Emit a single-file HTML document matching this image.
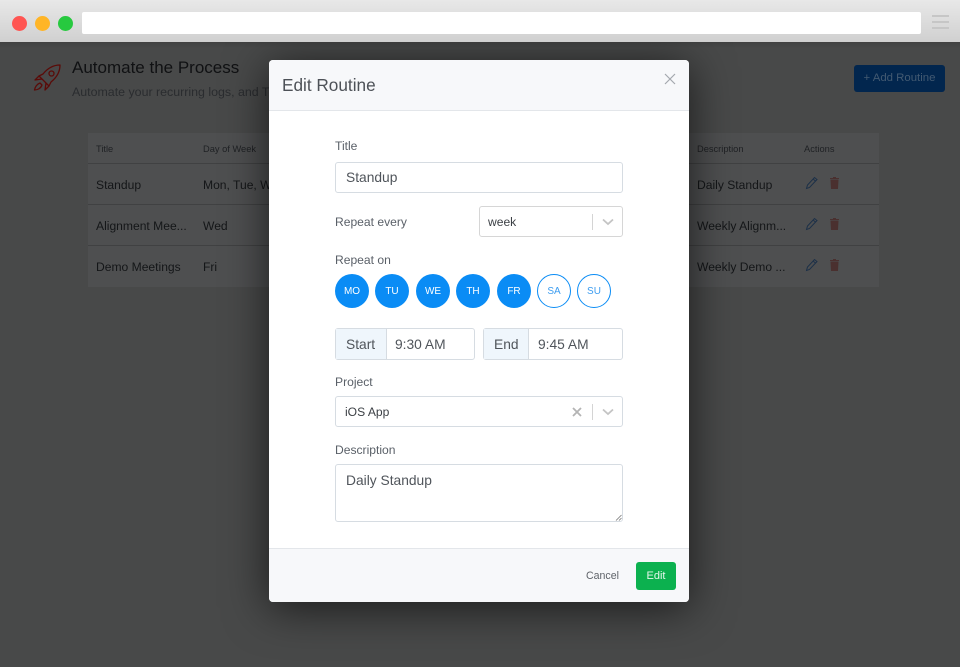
<!DOCTYPE html>
<html><head><meta charset="utf-8"><style>
html,body{margin:0;padding:0}
body{width:960px;height:667px;position:relative;overflow:hidden;background:#484949;font-family:"Liberation Sans",sans-serif;color:#4a4f55}
.a{position:absolute;white-space:nowrap}
.top{z-index:5}
.bar{left:0;top:0;width:960px;height:42px;background:linear-gradient(#e8e8e8,#d0d0d0)}
.dot{width:15px;height:15px;border-radius:50%;top:16px}
.line{height:1px;background:#404142}
.t{font-size:12.1px;color:#141618;line-height:16px}
.th{font-size:9.3px;color:#1f2124;line-height:12px}
.modal{left:269px;top:60px;width:420px;height:542px;background:#fff;border-radius:4px;box-shadow:0 6px 44px rgba(0,0,0,.65);overflow:hidden}
.lab{font-size:12.1px;color:#5a6068;line-height:16px}
.box{border:1px solid #d6dce2;border-radius:3px;box-sizing:border-box;background:#fff}
.v{font-size:13.8px;color:#50555b;line-height:18px}
.c{width:34px;height:34px;border-radius:50%;top:274px;background:#0a8cf5;color:#fff;font-size:10px;line-height:36px;text-align:center;box-sizing:border-box}
.o{background:#fff;border:1px solid #0a8cf5;color:#3d9df0;line-height:34px}
</style></head><body>
<div class="a bar top"></div>
<div class="a" style="left:0;top:42px;width:960px;height:6px;background:linear-gradient(rgba(0,0,0,.1),rgba(0,0,0,0))"></div>
<div class="a dot top" style="left:12px;background:#ff5552"></div>
<div class="a dot top" style="left:35px;background:#ffb527"></div>
<div class="a dot top" style="left:58px;background:#27c93f"></div>
<div class="a top" style="left:82px;top:12px;width:839px;height:22px;background:#fff;border-radius:2px"></div>
<div class="a top" style="left:932px;top:15px;width:17px;height:2px;background:#c6c6c6"></div>
<div class="a top" style="left:932px;top:21px;width:17px;height:2px;background:#c6c6c6"></div>
<div class="a top" style="left:932px;top:27px;width:17px;height:2px;background:#c6c6c6"></div>

<svg class="a" style="left:33px;top:63px" width="29" height="29" viewBox="0 0 29 29" fill="none" stroke="#5a0b08" stroke-width="1.3" stroke-linejoin="round"><path d="M27 2 C19 2 14 6 10 11 L6 13 L9 16 L13 20 L16 23 L18 19 C23 15 27 10 27 2Z"/><circle cx="18.500" cy="10.500" r="2.500"/><path d="M6 13 L2 17 L9 16M16 23 L12 27 L13 20M7 20 C4 21 2 24 1.500 27 C5 27 8 25 9 22Z"/></svg>
<div class="a" style="left:72px;top:57px;font-size:17px;line-height:22px;color:#101113">Automate the Process</div>
<div class="a" style="left:72px;top:84px;font-size:12.4px;line-height:17px;color:#2a2c2f">Automate your recurring logs, and Ti</div>
<div class="a" style="left:854px;top:65px;width:91px;height:27px;background:#02264e;border-radius:3px;color:#435a72;font-size:11.4px;line-height:27px;text-align:center">+ Add Routine</div>

<div class="a" style="left:88px;top:133px;width:791px;height:154px;background:#4e4f50"></div>
<div class="a line" style="left:88px;top:163px;width:791px"></div>
<div class="a line" style="left:88px;top:204px;width:791px"></div>
<div class="a line" style="left:88px;top:245px;width:791px"></div>
<div class="a th" style="left:96px;top:143px">Title</div>
<div class="a th" style="left:203px;top:143px">Day of Week</div>
<div class="a th" style="left:697px;top:143px">Description</div>
<div class="a th" style="left:804px;top:143px">Actions</div>
<div class="a t" style="left:96px;top:177px">Standup</div>
<div class="a t" style="left:203px;top:177px">Mon, Tue, W</div>
<div class="a t" style="left:697px;top:177px">Daily Standup</div>
<div class="a t" style="left:96px;top:218px">Alignment Mee...</div>
<div class="a t" style="left:203px;top:218px">Wed</div>
<div class="a t" style="left:697px;top:218px">Weekly Alignm...</div>
<div class="a t" style="left:96px;top:259px">Demo Meetings</div>
<div class="a t" style="left:203px;top:259px">Fri</div>
<div class="a t" style="left:697px;top:259px">Weekly Demo ...</div>

<svg class="a" style="left:804px;top:176px" width="40" height="14" viewBox="0 0 40 14" fill="none" stroke-width="1"><path stroke="#1c3048" d="M2.500 12.500 L3.500 9 L10.500 1.500 L13 3.500 L5.500 11.500ZM9 3 L11.500 5"/><path fill="#4a302f" stroke="#4a302f" d="M27 4h7l-.5 8.500h-6zM26 2.500h9M29 1.500h3"/></svg>
<svg class="a" style="left:804px;top:217px" width="40" height="14" viewBox="0 0 40 14" fill="none" stroke-width="1"><path stroke="#1c3048" d="M2.500 12.500 L3.500 9 L10.500 1.500 L13 3.500 L5.500 11.500ZM9 3 L11.500 5"/><path fill="#4a302f" stroke="#4a302f" d="M27 4h7l-.5 8.500h-6zM26 2.500h9M29 1.500h3"/></svg>
<svg class="a" style="left:804px;top:258px" width="40" height="14" viewBox="0 0 40 14" fill="none" stroke-width="1"><path stroke="#1c3048" d="M2.500 12.500 L3.500 9 L10.500 1.500 L13 3.500 L5.500 11.500ZM9 3 L11.500 5"/><path fill="#4a302f" stroke="#4a302f" d="M27 4h7l-.5 8.500h-6zM26 2.500h9M29 1.500h3"/></svg>

<div class="a modal"></div>
<div class="a" style="left:269px;top:60px;width:420px;height:51px;background:#f7f8fa;border-bottom:1px solid #e3e6ea;box-sizing:border-box;border-radius:4px 4px 0 0"></div>
<div class="a" style="left:282px;top:74px;font-size:17.2px;line-height:22px;color:#4d5157">Edit Routine</div>
<svg class="a" style="left:664px;top:73px" width="12" height="12" fill="none" stroke="#a4a8ad" stroke-width="1.2"><path d="M1 1L11 11M11 1L1 11"/></svg>

<div class="a lab" style="left:335px;top:138px">Title</div>
<div class="a box" style="left:335px;top:162px;width:288px;height:31px"></div>
<div class="a v" style="left:346px;top:169px">Standup</div>
<div class="a lab" style="left:335px;top:214px">Repeat every</div>
<div class="a box" style="left:479px;top:206px;width:144px;height:31px;border-color:#d6d6d6"></div>
<div class="a t" style="left:488px;top:214px;color:#3c4045">week</div>
<div class="a" style="left:592px;top:214px;width:1px;height:16px;background:#d4d4d4"></div>
<svg class="a" style="left:602px;top:218px" width="12" height="8" fill="none" stroke="#c4c4c4" stroke-width="1.800"><path d="M1 1.500L6 6L11 1.500"/></svg>

<div class="a lab" style="left:335px;top:252px">Repeat on</div>
<div class="a c" style="left:335px">MO</div>
<div class="a c" style="left:375px">TU</div>
<div class="a c" style="left:416px">WE</div>
<div class="a c" style="left:456px">TH</div>
<div class="a c" style="left:497px">FR</div>
<div class="a c o" style="left:537px">SA</div>
<div class="a c o" style="left:577px">SU</div>

<div class="a box" style="left:335px;top:328px;width:140px;height:32px"></div>
<div class="a" style="left:336px;top:329px;width:50px;height:30px;background:#eff6fc;border-right:1px solid #d6dce2"></div>
<div class="a v" style="left:346px;top:336px">Start</div>
<div class="a v" style="left:395px;top:336px">9:30 AM</div>
<div class="a box" style="left:483px;top:328px;width:140px;height:32px"></div>
<div class="a" style="left:484px;top:329px;width:44px;height:30px;background:#eff6fc;border-right:1px solid #d6dce2"></div>
<div class="a v" style="left:494px;top:336px">End</div>
<div class="a v" style="left:538px;top:336px">9:45 AM</div>

<div class="a lab" style="left:335px;top:374px">Project</div>
<div class="a box" style="left:335px;top:396px;width:288px;height:31px"></div>
<div class="a t" style="left:345px;top:404px;color:#3c4045">iOS App</div>
<svg class="a" style="left:572px;top:407px" width="10" height="10" fill="none" stroke="#b4b4b4" stroke-width="1.800"><path d="M1 1L9 9M9 1L1 9"/></svg>
<div class="a" style="left:592px;top:404px;width:1px;height:16px;background:#d4d4d4"></div>
<svg class="a" style="left:602px;top:408px" width="12" height="8" fill="none" stroke="#c4c4c4" stroke-width="1.800"><path d="M1 1.500L6 6L11 1.500"/></svg>

<div class="a lab" style="left:335px;top:442px">Description</div>
<div class="a box" style="left:335px;top:464px;width:288px;height:58px"></div>
<div class="a v" style="left:346px;top:472px">Daily Standup</div>
<svg class="a" style="left:615px;top:514px" width="7" height="7" fill="none" stroke="#777" stroke-width=".8"><path d="M1 6.500L6.500 1M4 6.500L6.500 4"/></svg>

<div class="a" style="left:269px;top:548px;width:420px;height:54px;background:#f7f8fa;border-top:1px solid #e3e6ea;box-sizing:border-box;border-radius:0 0 4px 4px"></div>
<div class="a" style="left:586px;top:568px;font-size:10.6px;line-height:16px;color:#5f6369">Cancel</div>
<div class="a" style="left:636px;top:562px;width:40px;height:28px;background:#0cb14f;border-radius:3px;color:#e6f7ec;font-size:11px;line-height:29px;text-align:center">Edit</div>
</body></html>
